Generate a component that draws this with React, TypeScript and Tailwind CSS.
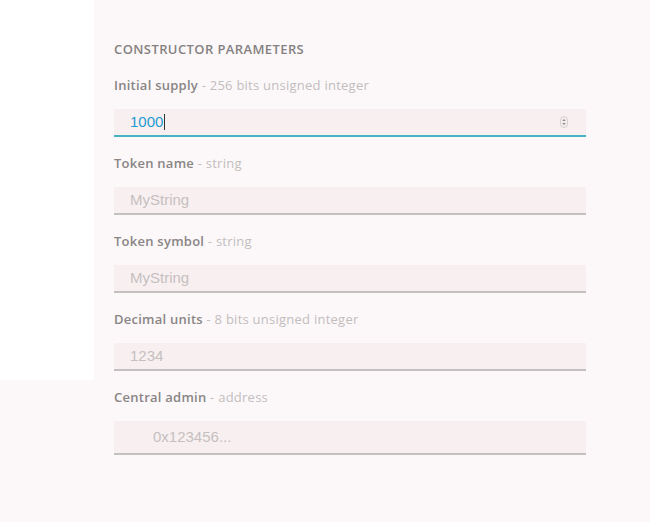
import React from "react";

type Field = {
  name: string;
  type: string;
  value?: string;
  placeholder?: string;
  active?: boolean;
  tall?: boolean;
  indent?: boolean;
};

const fields: Field[] = [
  { name: "Initial supply", type: "256 bits unsigned integer", value: "1000", active: true },
  { name: "Token name", type: "string", placeholder: "MyString" },
  { name: "Token symbol", type: "string", placeholder: "MyString" },
  { name: "Decimal units", type: "8 bits unsigned integer", placeholder: "1234" },
  { name: "Central admin", type: "address", placeholder: "0x123456...", tall: true, indent: true },
];

function Spinner() {
  return (
    <svg width="8" height="12" viewBox="0 0 8 12" className="absolute right-[18px] top-1/2 -translate-y-1/2">
      <rect x="0.5" y="0.5" width="7" height="11" rx="3.5" fill="#f3eded" stroke="#cfc9c9" strokeWidth="0.8" />
      <path d="M2.3 5 L4 3 L5.7 5 Z" fill="#8d8a8a" />
      <path d="M2.3 7 L4 9 L5.7 7 Z" fill="#8d8a8a" />
    </svg>
  );
}

export default function App() {
  return (
    <div className="w-[650px] h-[522px] bg-[#fcf8f9] flex overflow-hidden">
      <div className="w-[94px] shrink-0">
        <div className="h-[380px] bg-white" />
      </div>
      <div className="pl-[20px] w-[492px] flex flex-col" style={{ fontFamily: "'Open Sans', sans-serif" }}>
        <div className="mt-[41px] h-[16px] leading-[16px] text-[13px] font-semibold text-[#858181] tracking-[0.4px] whitespace-nowrap">
          CONSTRUCTOR PARAMETERS
        </div>
        {fields.map((f, i) => (
          <div key={i} className={i === 0 ? "mt-[20px]" : "mt-[18px]"}>
            <div className="h-[16px] leading-[16px] text-[13px] tracking-[0.25px] whitespace-nowrap">
              <span className="font-semibold text-[#898585]">{f.name}</span>
              <span className="text-[#c2bdbd]"> - {f.type}</span>
            </div>
            <div
              className={
                "relative mt-[16px] flex items-center bg-[#f8f0f0] border-b-2 " +
                (f.active ? "border-[#45b3c6] " : "border-[#c4c0c0] ") +
                (f.tall ? "h-[34px] " : "h-[28px] ") +
                (f.indent ? "pl-[39px]" : "pl-[16px]")
              }
              style={{ fontFamily: "'Liberation Sans', Arial, sans-serif" }}
            >
              {f.active ? (
                <span className="text-[15px] text-[#1f9ad3] flex items-center">
                  {f.value}
                  <span className="inline-block w-[1px] h-[16px] bg-[#333] ml-[1px]" />
                </span>
              ) : (
                <span className="text-[15px] text-[#c6bfc0]">{f.placeholder}</span>
              )}
              {f.active && <Spinner />}
            </div>
          </div>
        ))}
      </div>
    </div>
  );
}
